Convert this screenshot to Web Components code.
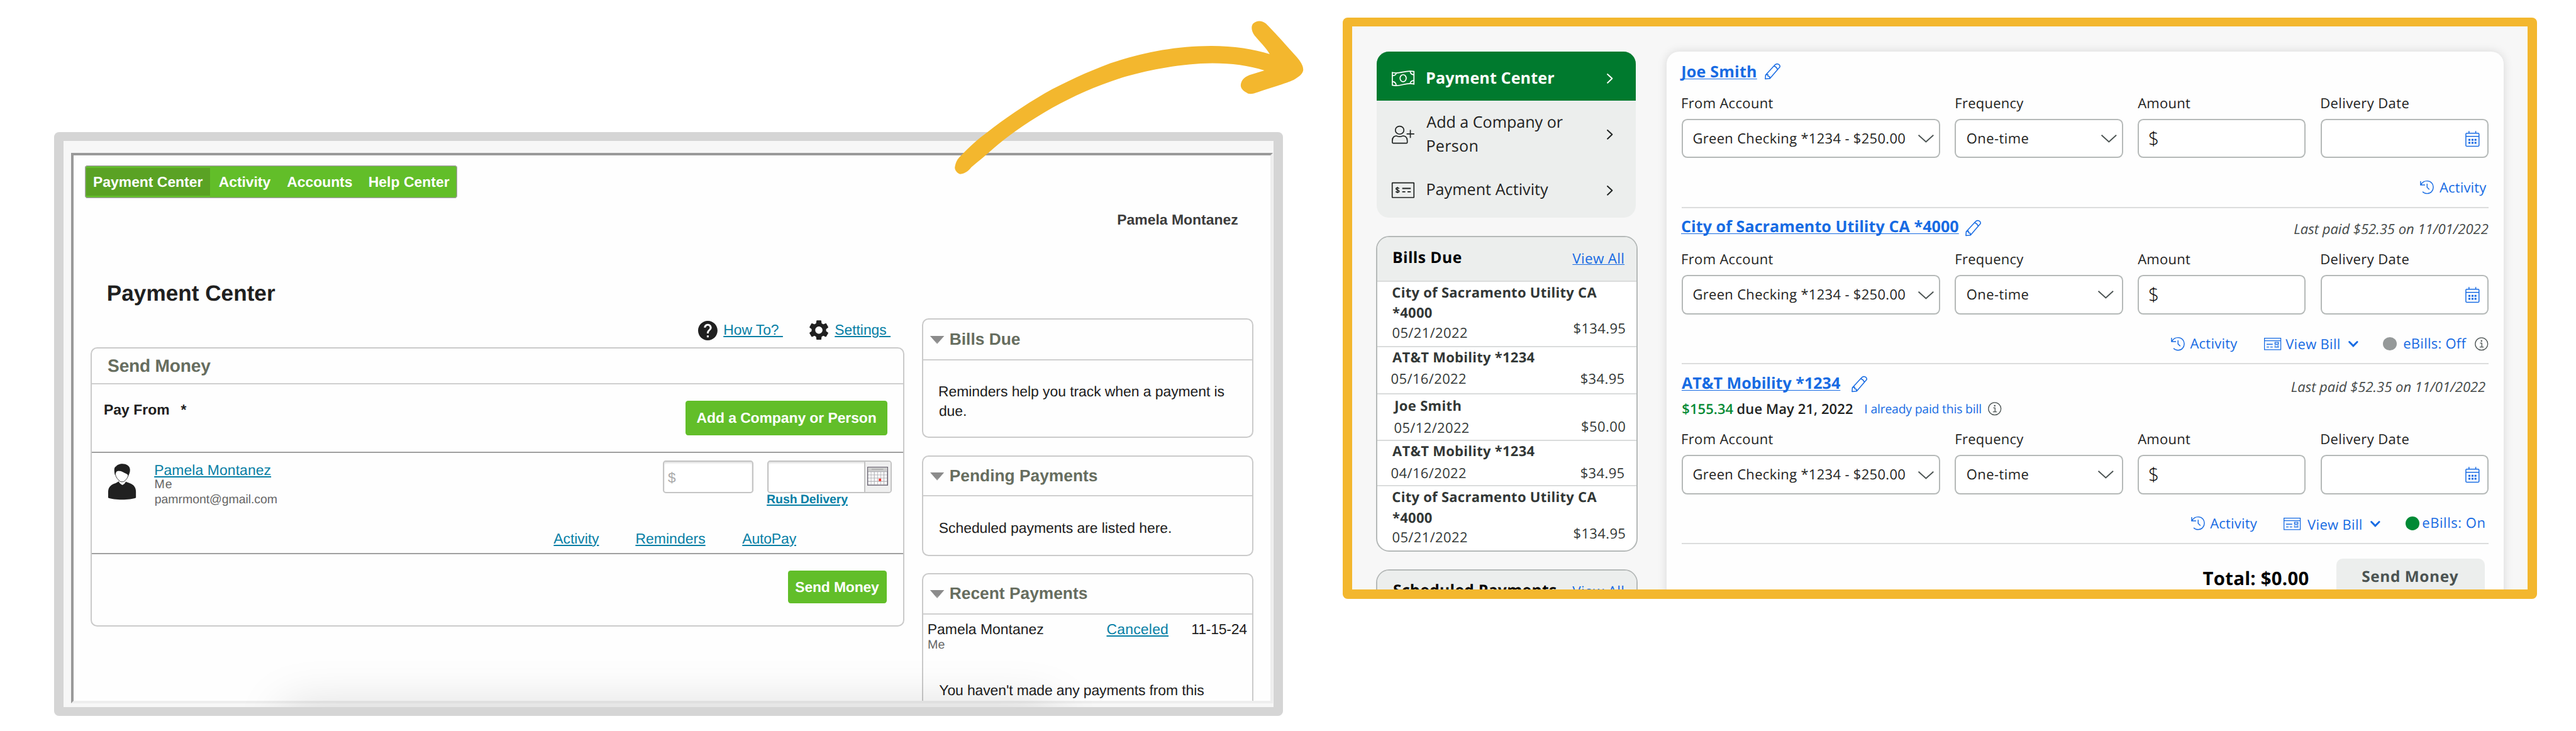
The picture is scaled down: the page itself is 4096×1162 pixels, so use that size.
<!DOCTYPE html>
<html lang="en">
<head>
<meta charset="utf-8">
<title>Payment Center – before and after</title>
<style>
  /* 1rem = 100 artboard units */
  html { font-size: 52.379px; background: #fff; overflow: hidden; }
  body { margin: 0; overflow: hidden; }
</style>
</head>
<body>
<compare-stage></compare-stage>
<script>
const R = v => +(v / 100).toFixed(4) + 'rem';
const UNIT = 0.52379;
const PX = 2 / UNIT;
const BLUE = '#176be3', LINK = '#077fa5', INK = '#1f2322';

class BaseElement extends HTMLElement {
  constructor() { super(); this.attachShadow({ mode: 'open' }); }
  connectedCallback() { this.shadowRoot.innerHTML = this.render(); }
  render() { return '<slot></slot>'; }
}

/* A single line of text set on a baseline and tracked to a measure. */
const pen = document.createElement('canvas').getContext('2d');
class FitText extends BaseElement {
  render() {
    const a = n => this.getAttribute(n);
    const family = a('face') === 'sans' ? '"Liberation Sans", Arial, sans-serif' : '"Open Sans", "Noto Sans", sans-serif';
    const px = a('size') * UNIT, weight = a('weight') || 400, slope = a('slope') || 'normal';
    const text = this.textContent, core = text.trim();
    /* measured at ten times the size, so that rounding of the glyph boxes does not add up */
    pen.font = `${slope} ${weight} ${px * 10}px ${family}`;
    const big = pen.measureText(core);
    const left = big.actualBoundingBoxLeft / 10, ink = big.actualBoundingBoxRight / 10 + left;
    pen.font = `${slope} ${weight} ${px}px ${family}`;
    const m = pen.measureText(core);
    const track = core.length > 1 ? (a('measure') * UNIT - ink) / (core.length - 1) : 0;
    const up = Math.round(m.fontBoundingBoxAscent), down = Math.round(m.fontBoundingBoxDescent);
    const lift = (px - up - down) / 2 + up;
    this.style.marginTop = (a('base') * UNIT - lift + 0.5) + 'px';
    return `<style>
      :host { display: block; flex: none; width: ${R(a('measure'))}; height: ${px}px; white-space: pre; color: ${a('ink') || 'inherit'}; }
      span { display: block; width: max-content; margin-left: ${left}px; font: ${slope} ${weight} ${px}px/${px}px ${family}; letter-spacing: ${track.toFixed(4)}px; text-rendering: geometricPrecision;
        ${a('line') === 'legacy' ? 'text-decoration: underline; text-decoration-thickness: 2px; text-underline-offset: .085em;' : ''}
        ${a('line') === 'modern' ? 'text-decoration: underline; text-decoration-thickness: 1px; text-underline-offset: .065em; text-decoration-skip-ink: none;' : ''} }
    </style><span><slot></slot></span>`;
  }
}
customElements.define('fit-text', FitText);

const ICONS = {
  help: ['2 2 20 20', '<path fill="currentColor" d="M12 2C6.48 2 2 6.48 2 12s4.48 10 10 10 10-4.48 10-10S17.52 2 12 2zm1 17h-2v-2h2v2zm2.07-7.75l-.9.92C13.45 12.9 13 13.5 13 15h-2v-.5c0-1.1.45-2.1 1.17-2.83l1.24-1.26c.37-.36.59-.86.59-1.41 0-1.1-.9-2-2-2s-2 .9-2 2H8c0-2.21 1.79-4 4-4s4 1.79 4 4c0 .88-.36 1.68-.93 2.25z"/>'],
  gear: ['2.6 2.2 18.8 19.6', '<path fill="currentColor" d="M19.14 12.94c.04-.3.06-.61.06-.94 0-.32-.02-.64-.07-.94l2.03-1.58c.18-.14.23-.41.12-.61l-1.92-3.32c-.12-.22-.37-.29-.59-.22l-2.39.96c-.5-.38-1.03-.7-1.62-.94l-.36-2.54c-.04-.24-.24-.41-.48-.41h-3.84c-.24 0-.43.17-.47.41l-.36 2.54c-.59.24-1.13.57-1.62.94l-2.39-.96c-.22-.08-.47 0-.59.22L2.74 8.87c-.12.21-.08.47.12.61l2.03 1.58c-.05.3-.09.63-.09.94s.02.64.07.94l-2.03 1.58c-.18.14-.23.41-.12.61l1.92 3.32c.12.22.37.29.59.22l2.39-.96c.5.38 1.03.7 1.62.94l.36 2.54c.05.24.24.41.48.41h3.84c.24 0 .44-.17.47-.41l.36-2.54c.59-.24 1.13-.56 1.62-.94l2.39.96c.22.08.47 0 .59-.22l1.92-3.32c.12-.22.07-.47-.12-.61l-2.01-1.58zM12 15.6c-1.98 0-3.6-1.62-3.6-3.6s1.62-3.6 3.6-3.6 3.6 1.62 3.6 3.6-1.62 3.6-3.6 3.6z"/>'],
  person: ['147 326 66 173', '<path fill="currentColor" d="M147 462C147 440 152 427 165 419L172 411Q175 424 181 428Q186 424 189 412L198 419C208 426 213 440 213 460L213 489C200 501 160 501 147 489Z"/><path fill="#fff" stroke="currentColor" stroke-width=".9" d="M164 374C165 395 172 402 173 408Q180 418 187 408C189 402 194 395 195 378L185 360L166 358Z"/><path fill="currentColor" d="M163 380C160 350 162 343 166 339C170 322 198 318 199 355C199 368 197 375 195 384C193 374 189 374 180 364C174 359 169 360 166 366Z"/>'],
  money: ['249 303 104 83', '<g fill="none" stroke="currentColor" stroke-width="1.7"><path d="M251.500 314C285 326 310 298 350.500 308.500V375C310 364 290 392 251.500 381Z"/><ellipse cx="301" cy="344" rx="14" ry="18.500"/><path d="M251 331Q268 330 269 318M333 306Q334 325 351 326M251 362Q268 363 269 382M333 373Q334 357 351 357"/></g>'],
  adduser: ['249 596 104 94', '<g fill="none" stroke="currentColor" stroke-width="1.7"><ellipse cx="285" cy="619" rx="19.500" ry="21"/><path d="M251.500 683V674C251.500 655 262 648 272 650Q285 656 298 650C310 648 320 656 320 674V683Q320 687.500 316 687.500H256Q251.500 687.500 251.500 683Z"/><path d="M317 639H352M334 618V660"/></g>'],
  check: ['249 894 104 83', '<g fill="none" stroke="currentColor" stroke-width="1.7"><rect x="251" y="896" width="99.500" height="78" rx="2"/><path stroke-width="2" d="M297 926H336"/><path d="M297 943.500H311M321 943.500H336"/><path stroke-width="1.3" d="M275 917V951"/><path stroke-width="1.6" d="M283 927C279 920 268 921 268.500 928C269 935 283 933 283 941C282 948 272 948 267 942"/></g>'],
  right: ['0 0 18 30', '<path fill="none" stroke="currentColor" stroke-width="2" stroke-linecap="round" stroke-linejoin="round" d="M2 2L16 15L2 28"/>'],
  down: ['0 0 47 24', '<path fill="none" stroke="currentColor" stroke-width="1.900" d="M1 1.500L23.500 22L46 1.500"/>'],
  boldown: ['0 0 30 19', '<path fill="none" stroke="currentColor" stroke-width="2.900" stroke-linecap="round" d="M3 3L15 15L27 3"/>'],
  pencil: ['355 141 55 94', '<g fill="none" stroke="currentColor" stroke-width="1.500" stroke-linejoin="round"><path d="M398 143C404 145 408 152 407.500 161L373 230L357 233L358 210L389 151Q394 143 398 143ZM386 156Q396 160 399 177M358 210L366 206V216L372 219V230"/></g>'],
  calendar: ['1268 457 50 80', '<g fill="none" stroke="currentColor" stroke-width="1.500"><rect x="1270" y="468.500" width="46.500" height="66" rx="4"/><path d="M1270 485H1317M1281 458V468M1305 458V468"/></g><path fill="currentColor" d="M1279 497h7v10h-7zM1290 497h7v10h-7zM1300.500 497h7v10h-7zM1279 512h7v10h-7zM1290 512h7v10h-7zM1300.500 512h7v10h-7z"/>'],
  history: ['1108 708 49 67', '<g fill="none" stroke="currentColor" stroke-width="1.450"><path d="M1110 711V730H1126M1111 729C1116 716 1124 710 1133 710C1146 710 1155 724 1155 741C1155 759 1146 773 1133 773C1127 773 1121 770 1117 764M1133 724V742L1141 753"/></g>'],
  bill: ['553 46 61 68', '<g fill="none" stroke="currentColor" stroke-width="1.300"><path d="M554.500 48H612.500V112H554.500ZM554 62H613M562 82H584M562 97H571M575 97H584M592 71H604V82H592ZM590 91H595M599 91H606M590 98H606"/></g>'],
  info: ['0 0 41 41', '<g fill="none" stroke="currentColor" stroke-width="1.300"><circle cx="20.500" cy="20.500" r="19"/><path d="M16 18H21.500V30M15 30H27"/></g><circle cx="20.500" cy="11.500" r="2.400" fill="currentColor"/>'],
  sheet: ['452 341 53 89', '<rect x="452" y="341" width="53" height="89" fill="#655f6e"/><rect x="454" y="344" width="49" height="83" fill="#b4b4b8"/><rect x="454" y="344" width="49" height="18" fill="#cdcdcd"/><path stroke="#9a9a9a" stroke-width="1" d="M463 353H493"/><g fill="#fff">' +
    [366, 381, 396, 412].map(y => [454.5, 462.5, 471, 479, 487, 495.5].map(x => `<rect x="${x}" y="${y}" width="6.6" height="12"/>`).join('')).join('') + '</g><rect x="481.500" y="397" width="6" height="12" fill="#f0302a"/>']
};
class LineIcon extends BaseElement {
  render() {
    const [box, art] = ICONS[this.getAttribute('name')];
    return `<style>:host { display: block; flex: none; } svg { display: block; width: 100%; height: 100%; overflow: visible; } svg * { vector-effect: non-scaling-stroke; }</style>
      <svg viewBox="${box}" preserveAspectRatio="none" aria-hidden="true">${art}</svg>`;
  }
}
customElements.define('line-icon', LineIcon);

/* Row builders: every row is a flex line, spacing is expressed as margins between neighbours. */
const esc = s => s.replace(/&/g, '&amp;');
const T = (x, x2, base, size, text, o = {}) => ({ x, w: x2 - x, html: (gap, top) =>
  `<fit-text measure="${(x2 - x).toFixed(2)}" base="${(base - top).toFixed(2)}" size="${size}" ${o.w ? `weight="${o.w}"` : ''} ${o.i ? 'slope="italic"' : ''} ${o.c ? `ink="${o.c}"` : ''} ${o.u ? `line="${o.u}"` : ''} ${o.f ? `face="${o.f}"` : ''} style="margin-left:${R(gap)}">${esc(text)}</fit-text>` });
const I = (x, y, w, h, name, color = INK) => ({ x, w, html: (gap, top) =>
  `<line-icon name="${name}" style="margin:${R(y - top)} 0 0 ${R(gap)};width:${R(w)};height:${R(h)};color:${color}"></line-icon>` });
const B = (x, y, w, h, css, kids = [], tag = 'div') => ({ x, w, html: (gap, top) =>
  `<${tag} class="box" style="margin:${R(y - top)} 0 0 ${R(gap)};width:${R(w)};height:${R(h)};${css}">${line(x, y, kids)}</${tag}>` });
function line(x0, y, items) {
  let at = x0;
  return items.map(k => { const s = k.html(k.x - at, y); at = k.x + k.w; return s; }).join('');
}
function stack(x0, y0, rows) {
  return rows.map(([y, ...items], n) => {
    const next = rows[n + 1] ? rows[n + 1][0] : y;
    const lead = n === 0 ? y - y0 : 0;
    return `<div class="row" style="margin-top:${R(lead)};height:${R(next - y)}">${line(x0, y, items)}</div>`;
  }).join('');
}
const RULE = (x, y, w, color) => B(x, y - 1.7, w, 3.4, `background:${color}`);
const COMMON = `.row, .box { display: flex; align-items: flex-start; box-sizing: border-box; } .row > *, .box > * { flex: none; }`;

/* ---------- previous design ---------- */
const S = (x, x2, b, s, t, o = {}) => T(x, x2, b, s, t, { f: 'sans', ...o });
const G = '#62be29';

class LegacyPanel extends BaseElement {
  render() {
    return `<style>:host { display: block; flex: none; box-sizing: border-box; border: 2px solid #cacaca; border-radius: .2rem; background: #fefefe; }
      header { box-sizing: border-box; height: ${this.getAttribute('head')}; border-bottom: 2px solid #cfcfcf; }</style>
      <header><slot name="title"></slot></header><slot></slot>`;
  }
}
customElements.define('legacy-panel', LegacyPanel);

function sidePanel(y, h, headY, base, tri, title, x2, rows) {
  const x0 = 2798.3 + PX, y0 = y + PX;
  return `<legacy-panel head="${R(headY + 1.9 - y0)}" style="width:${R(1007.5)};height:${R(h)}">
    <div slot="title">${stack(x0, y0, [[y0,
      B(2823, tri, 44, 25, 'background:linear-gradient(#8b8b8b,#8b8b8b 60%,#a5a5a5);clip-path:polygon(0 0,100% 0,50% 100%)'),
      S(2885.6, x2, base, 50.3, title, { w: 700, c: '#666d5f' })]])}</div>
    ${stack(x0, headY + 1.9, rows)}</legacy-panel>`;
}

class LegacyWindow extends BaseElement {
  render() {
    const X = 215 + 2 * PX, Y = 464 + 2 * PX, D = '#202020';
    const nav = B(257, 503.4, 1131, 98.4, `background:${G};border-radius:.08rem;box-shadow:inset 0 0 0 1.3px #a39aa6`, [
      B(262, 510, 375, 85, 'background:#5aa224', [S(285.5, 615, 567, 43.8, 'Payment Center', { w: 700, c: '#fff' })]),
      S(665, 821.3, 567, 43.8, 'Activity', { w: 700, c: '#fff' }),
      S(872, 1068.6, 567, 43.8, 'Accounts', { w: 700, c: '#fff' }),
      S(1121.3, 1364, 567, 43.8, 'Help Center', { w: 700, c: '#fff' })], 'nav');
    const px = 274 + PX, py = 1054 + PX;
    const field = 'background:#fff;border:2px solid #c4c4c4;border-radius:.09rem;box-shadow:inset 0 2px 3px #ddd';
    const send = `<legacy-panel head="${R(1166.5 - py)}" style="width:${R(2472)};height:${R(847.6)};margin-top:${R(1054 - 960)}">
      <div slot="title">${stack(px, py, [[py, S(327.5, 640, 1128, 53.8, 'Send Money', { w: 700, c: '#666d5f' })]])}</div>
      ${stack(px, 1166.5, [
        [1166.5, S(317.7, 512.3, 1258, 43.8, 'Pay From', { w: 700, c: D }), S(549, 563, 1258, 43.8, '*', { w: 700, c: D }),
          B(2082, 1216, 611, 106, `background:${G};border-radius:.08rem`, [S(2115.5, 2658.5, 1283.5, 43.8, 'Add a Company or Person', { w: 700, c: '#fff' })], 'div')],
        [1371.6, RULE(px, 1373.5, 2472 - 2 * PX, '#a0a0a0')],
        [1385, I(327.5, 1408, 84.3, 110, 'person', D), S(471.6, 821, 1441, 43.8, 'Pamela Montanez', { c: LINK, u: 'legacy' }),
          B(2012.4, 1397.7, 275, 99, field, [S(2024, 2047, 1462, 43, '$', { c: '#a9a9a9' })]),
          B(2330, 1397.7, 376.5, 99, field + ';overflow:hidden', [B(2620, 1397.7, 79.5, 91.5, 'background:#efefef;border-left:2px solid #c4c4c4', [I(2625, 1414, 63, 57, 'sheet')])])],
        [1455, S(471.6, 521, 1484.5, 37.5, 'Me', { c: '#666' })],
        [1500, S(471.6, 840, 1529.7, 37.3, 'pamrmont@gmail.com', { c: '#666' }), S(2330, 2574, 1531, 37.3, 'Rush Delivery', { w: 700, c: LINK, u: 'legacy' })],
        [1600, S(1680.8, 1818.6, 1649, 43.8, 'Activity', { c: LINK, u: 'legacy' }), S(1932.5, 2140, 1649, 43.8, 'Reminders', { c: LINK, u: 'legacy' }), S(2253.4, 2417.4, 1649, 43.8, 'AutoPay', { c: LINK, u: 'legacy' })],
        [1679.2, RULE(px, 1681, 2472 - 2 * PX, '#a0a0a0')],
        [1700, B(2391.4, 1733, 301, 98.4, `background:${G};border-radius:.08rem`, [S(2415, 2668.7, 1797, 43.8, 'Send Money', { w: 700, c: '#fff' })])]
      ])}</legacy-panel>`;
    return `<style>${COMMON}
      :host { display: block; flex: none; box-sizing: border-box; width: 37.29rem; height: 17.725rem; margin: 4.007rem 0 0 1.65rem; padding: .27rem; background: #d5d5d5; border-radius: .15rem; }
      .pad { position: relative; box-sizing: border-box; height: 100%; padding: .36rem .03rem .125rem .23rem; background: #f7f7f7; overflow: hidden; }
      .view { box-sizing: border-box; height: 100%; border: 4px solid; border-color: #999 #eee #eee #999; background: #fefefe; overflow: hidden; }
      .cols { display: flex; align-items: flex-start; }
      .main { width: ${R(2472)}; margin-left: ${R(274 - X)}; }
      .side { display: flex; flex-direction: column; margin: ${R(7)} 0 0 ${R(52.3)}; }
      .shade { position: absolute; left: 6.7rem; right: 6.7rem; top: 100%; height: 1.4rem; box-shadow: 0 0 1.5rem rgba(0,0,0,.15); }
    </style>
    <div class="pad"><div class="view">
      ${stack(X, Y, [[503.4, nav], [640, S(3394, 3757, 682, 43.8, 'Pamela Montanez', { w: 700, c: '#3c3c3c' })],
        [850, S(328.4, 834.7, 914.4, 67.2, 'Payment Center', { w: 700, c: D })], [960]])}
      <div class="cols">
        <div class="main"><div style="height:0">${stack(274, 960, [[960, I(2119, 973.5, 59, 59, 'help', D), S(2199.5, 2364, 1016, 43.6, 'How To? ', { c: LINK, u: 'legacy' }), I(2457, 973, 57.5, 60, 'gear', D), S(2536, 2690, 1016, 43.6, 'Settings ', { c: LINK, u: 'legacy' })]])}</div>${send}</div>
        <div class="side">
          ${sidePanel(967, 362.5, 1091.7, 1046.4, 1019.4, 'Bills Due', 3096.5, [[1100, S(2852, 3716, 1203.7, 43.8, 'Reminders help you track when a payment is', { c: D })], [1220, S(2852, 2931, 1262, 43.8, 'due.', { c: D })]])}
          <div style="height:${R(52.3)}"></div>
          ${sidePanel(1381.8, 305.5, 1505.5, 1460, 1433.5, 'Pending Payments', 3330.7, [[1520, S(2852, 3553.7, 1617.8, 43.8, 'Scheduled payments are listed here.', { c: D })]])}
          <div style="height:${R(51.7)}"></div>
          ${sidePanel(1739, 480, 1863.3, 1817.4, 1791, 'Recent Payments', 3300, [[1870, S(2819, 3166.7, 1924.6, 43.8, 'Pamela Montanez', { c: D }), S(3361.4, 3544.3, 1924.6, 43.8, 'Canceled', { c: LINK, u: 'legacy' }), S(3620, 3785, 1924.6, 43.8, '11-15-24', { c: D })],
            [1935, S(2819, 2867, 1971.7, 37.5, 'Me', { c: '#666' })], [2050, S(2852, 3654, 2110.8, 43.8, "You haven't made any payments from this", { c: D })]])}
        </div>
      </div>
    </div><div class="shade"></div></div>`;
  }
}
customElements.define('legacy-window', LegacyWindow);

/* ---------- new design ---------- */
class SideMenu extends BaseElement {
  render() {
    const x = 4180;
    return `<style>${COMMON} :host { display: block; width: 7.86rem; height: 5.04rem; margin-left: .026rem; border-radius: .37rem; background: #eceeed; overflow: hidden; }
      .on { height: 1.498rem; background: #007a2e; }</style>
      <nav><div class="on">${stack(x, 156, [[156, I(4225, 214, 69, 47.6, 'money', '#fff'), T(4332.5, 4718, 255.2, 48, 'Payment Center', { w: 700, c: '#fff' }), I(4878, 223.7, 18, 30, 'right', '#fff')]])}</div>
      ${stack(x, 305.8, [[320, I(4225, 382, 69, 54, 'adduser'), T(4330.6, 4744, 390, 48, 'Add a Company or', { c: INK }), I(4878, 393, 18, 30, 'right')],
        [420, T(4333.5, 4484.5, 462, 48, 'Person', { c: INK })],
        [500, I(4225, 553, 69, 47.6, 'check'), T(4333.5, 4700, 594, 48, 'Payment Activity', { c: INK }), I(4878, 562.5, 18, 30, 'right')]])}</nav>`;
  }
}
customElements.define('side-menu', SideMenu);

class SideCard extends BaseElement {
  render() {
    return `<style>:host { display: block; box-sizing: border-box; border: 2px solid #b5b9b8; border-radius: .4rem; background: #fff; overflow: hidden; }
      header { box-sizing: border-box; height: 1.344rem; background: #eceeed; border-bottom: 2px solid #dadcdc; }</style>
      <header><slot name="title"></slot></header><slot></slot>`;
  }
}
customElements.define('side-card', SideCard);

function cardHead(top, title, x2) {
  return `<div slot="title">${stack(4177.4 + PX, top + PX, [[top + PX, T(4231, x2, top + 83.7, 47, title, { w: 700, c: '#000' }), T(4773.7, 4927.6, top + 83.7, 43, 'View All', { c: BLUE, u: 'modern' })]])}</div>`;
}

class AccountField extends BaseElement {
  render() {
    return `<style>:host { display: flex; align-items: flex-start; box-sizing: border-box; border: 2px solid #b5b9b8; border-radius: .17rem; background: #fff; }</style><slot></slot>`;
  }
}
customElements.define('account-field', AccountField);
const F = (x, x2, y, kids) => ({ x, w: x2 - x, html: (gap, top) =>
  `<account-field style="margin:${R(y - top)} 0 0 ${R(gap)};width:${R(x2 - x)};height:${R(119)}">${line(x + PX, y + PX, kids)}</account-field>` });

const formRows = (d, arrowX) => [
  [280 + d, T(5107.5, 5382, 328.7 + d, 42, 'From Account', { c: INK }), T(5938.5, 6142.7, 328.7 + d, 42, 'Frequency', { c: INK }), T(6489.7, 6648.7, 328.7 + d, 42, 'Amount', { c: INK }), T(7047.5, 7311.9, 328.7 + d, 42, 'Delivery Date', { c: INK })],
  [350 + d,
    F(5104.3, 5890, 361.3 + d, [T(5141, 5783, 436.3 + d, 42, 'Green Checking *1234 - $250.00', { c: INK }), I(5823, 409.8 + d, 47.4, 24, 'down', '#4b5352')]),
    F(5934.7, 6445.3, 361.3 + d, [T(5972, 6157, 436.3 + d, 42, 'One-time', { c: INK }), I(arrowX, 409 + d, 47, 24, 'down', '#4b5352')]),
    F(6489.7, 7000, 361.3 + d, [T(6525.6, 6551, 441.5 + d, 57, '$', { w: 300, c: '#000' })]),
    F(7045.2, 7555.4, 361.3 + d, [I(7483.6, 397 + d, 42.8, 48.4, 'calendar', BLUE)])]
];
const divider = y => [y - 1.8, B(5104.3, y - 1.8, 2451, 3.8, 'background:#dcdddd')];
const heading = (x, x2, base, text, px) => [T(x, x2, base, 48, text, { w: 700, c: BLUE, u: 'modern' }), I(px, base - 44.5 + (base > 1000 ? 5.8 : base > 500 ? 6.2 : 0), 48.5, 47.7, 'pencil', BLUE)];
const paid = (x, x2, base) => T(x, x2, base, 42, 'Last paid $52.35 on 11/01/2022', { i: 1, c: '#444948' });
const dot = (x, y, c) => B(x, y, 42, 41, `background:${c};border-radius:50%`);

class PaymentList extends BaseElement {
  render() {
    const x = 5058.8;
    return `<style>${COMMON} :host { display: block; flex: none; width: 25.42rem; height: 17.5rem; margin-left: ${R(5058.8 - 4972)}; border-radius: .38rem; background: #fefefe; box-shadow: 0 0 .28rem rgba(0,0,0,.13); }</style>
    ${stack(x, 156.2, [
      [180, ...heading(5100, 5330.2, 236.8, 'Joe Smith', 5357)],
      ...formRows(0, 6379.4),
      [520, I(7347, 549, 42, 40.6, 'history', BLUE), T(7405.9, 7547.7, 585.3, 42, 'Activity', { c: BLUE })],
      divider(629.7),
      [650, ...heading(5106, 5945.4, 707.8, 'City of Sacramento Utility CA *4000', 5966), paid(6965, 7553.7, 711.4)],
      ...formRows(474, 6370),
      [1000, I(6590.6, 1022.8, 42, 40.8, 'history', BLUE), T(6648.7, 6792, 1059, 42, 'Activity', { c: BLUE }),
        I(6872.6, 1025, 52, 37, 'bill', BLUE), T(6938.4, 7101.6, 1061.8, 42, 'View Bill', { c: BLUE }), I(7129, 1035, 30, 19, 'boldown', BLUE),
        dot(7234, 1022.8, '#959999'), T(7298, 7488, 1058.5, 42, 'eBills: Off', { c: BLUE }), I(7513.8, 1024, 41, 41, 'info', '#4b5352')],
      divider(1103.5),
      [1120, ...heading(5105, 5586.5, 1181.7, 'AT&T Mobility *1234', 5621), paid(6956.3, 7545, 1190.3)],
      [1215, T(5107.9, 5261.4, 1256.9, 42, '$155.34', { w: 600, c: '#058a34' }), T(5274.5, 5624, 1256.9, 42, 'due May 21, 2022', { w: 600, c: INK }),
        T(5663, 6013, 1253.8, 37, 'I already paid this bill', { c: BLUE }), I(6034.7, 1220.5, 41, 41, 'info', '#4b5352')],
      ...formRows(1020, 6370),
      [1540, I(6651.2, 1568.7, 42, 41, 'history', BLUE), T(6709.4, 6852, 1605, 42, 'Activity', { c: BLUE }),
        I(6933, 1570.8, 52, 37, 'bill', BLUE), T(7005, 7168.3, 1608.2, 42, 'View Bill', { c: BLUE }), I(7195, 1581.2, 30, 19, 'boldown', BLUE),
        dot(7303.3, 1568.7, '#008a35'), T(7355.4, 7541.7, 1603.9, 42, 'eBills: On', { c: BLUE })],
      divider(1649.5),
      [1690, T(6688, 7007.6, 1775.7, 56, 'Total: $0.00', { w: 700, c: '#000' }),
        B(7093, 1695, 449.6, 120, 'background:#eceeed;border-radius:.19rem', [T(7171.7, 7462.3, 1768.7, 46.5, 'Send Money', { w: 700, c: '#4b5352' })])]
    ])}`;
  }
}
customElements.define('payment-list', PaymentList);

class ModernWindow extends BaseElement {
  render() {
    const W = '#323736', x0 = 4177.4 + PX, name = { w: 700, c: W }, c = { c: W };
    const rule = y => [y - 1.8, B(x0, y - 1.8, 794.6 - 2 * PX, 3.8, 'background:#dadcdc')];
    const bills = stack(x0, 855.1, [
      [860, T(4228, 4847, 903.3, 42, 'City of Sacramento Utility CA', name)],
      [920, T(4228, 4346.5, 966, 42, '*4000', name)],
      [980, T(4228, 4453, 1026, 42, '05/21/2022', c), T(4778.3, 4933, 1013.9, 42, '$134.95', c)],
      rule(1051.5),
      [1060, T(4227, 4658.3, 1101, 42, 'AT&T Mobility *1234', name)],
      [1120, T(4224.5, 4449.4, 1166.6, 42, '05/16/2022', c), T(4799.6, 4929.6, 1166.6, 42, '$34.95', c)],
      rule(1195),
      [1205, T(4229.8, 4434, 1247.8, 42, 'Joe Smith', name)],
      [1265, T(4233.8, 4458.6, 1313.8, 42, '05/12/2022', c), T(4802, 4933, 1311.4, 42, '$50.00', c)],
      rule(1336.3),
      [1345, T(4227, 4658.3, 1386, 42, 'AT&T Mobility *1234', name)],
      [1405, T(4224.5, 4449.4, 1451.4, 42, '04/16/2022', c), T(4799.6, 4929.6, 1451.4, 42, '$34.95', c)],
      rule(1474.4),
      [1482, T(4228, 4847, 1524, 42, 'City of Sacramento Utility CA', name)],
      [1540, T(4228, 4346.5, 1587, 42, '*4000', name)],
      [1600, T(4228, 4453, 1646.5, 42, '05/21/2022', c), T(4778.3, 4933, 1635, 42, '$134.95', c)]
    ]);
    return `<style>${COMMON}
      :host { display: block; flex: none; box-sizing: border-box; width: 36.25rem; height: 17.637rem; margin: .53rem 0 0 1.82rem; padding: .27rem .275rem .27rem .278rem; background: #f3b72e; border-radius: .15rem; }
      .view { display: flex; align-items: flex-start; box-sizing: border-box; height: 100%; padding: .76rem 0 0 ${R(4177.4 - 4103.8)}; background: #f7f7f7; overflow: hidden; }
      aside { display: flex; flex: none; flex-direction: column; width: 7.946rem; }
    </style>
    <div class="view"><aside>
      <side-menu></side-menu>
      <side-card style="margin-top:${R(56.8)};height:${R(957.5)}">${cardHead(716.8, 'Bills Due', 4435.4)}${bills}</side-card>
      <side-card style="margin-top:${R(53.2)};height:4rem">${cardHead(1727.5, 'Scheduled Payments', 4724)}</side-card>
    </aside><payment-list></payment-list></div>`;
  }
}
customElements.define('modern-window', ModernWindow);

class FlowArrow extends BaseElement {
  render() {
    return `<style>:host { display: block; position: absolute; left: 28.5rem; top: .4rem; width: 12rem; height: 5.2rem; } svg { display: block; width: 100%; height: 100%; }</style>
    <svg viewBox="0 0 1568 1568" preserveAspectRatio="none" aria-hidden="true"><path fill="#f3b72e" d="M63 1410C66 1370 70 1345 82 1315C120 1225 155 1150 190 1092C260 965 340 840 420 732C500 632 590 535 680 458C800 365 930 300 1080 299C1170 300 1250 328 1312 374C1295 310 1270 255 1252 205C1238 155 1238 120 1246 95C1262 64 1280 66 1297 95C1330 170 1380 300 1415 390C1435 440 1445 480 1445 520C1443 555 1430 580 1407 610C1375 645 1310 685 1265 722C1250 735 1238 742 1226 735C1210 715 1198 695 1197 662C1198 625 1205 590 1232 566L1291 524C1230 478 1160 457 1085 457C960 460 840 515 740 580C640 650 540 750 450 865C370 970 290 1095 235 1200C195 1280 160 1350 128 1410C118 1440 105 1465 84 1473C70 1462 62 1430 63 1410Z"/></svg>`;
  }
}
customElements.define('flow-arrow', FlowArrow);

class CompareStage extends BaseElement {
  render() {
    return `<style>:host { display: flex; align-items: flex-start; position: relative; width: 78.2rem; height: 22.18rem; background: #fff; overflow: hidden; }</style>
      <legacy-window></legacy-window><modern-window></modern-window><flow-arrow></flow-arrow>`;
  }
}
customElements.define('compare-stage', CompareStage);
</script>
</body>
</html>
